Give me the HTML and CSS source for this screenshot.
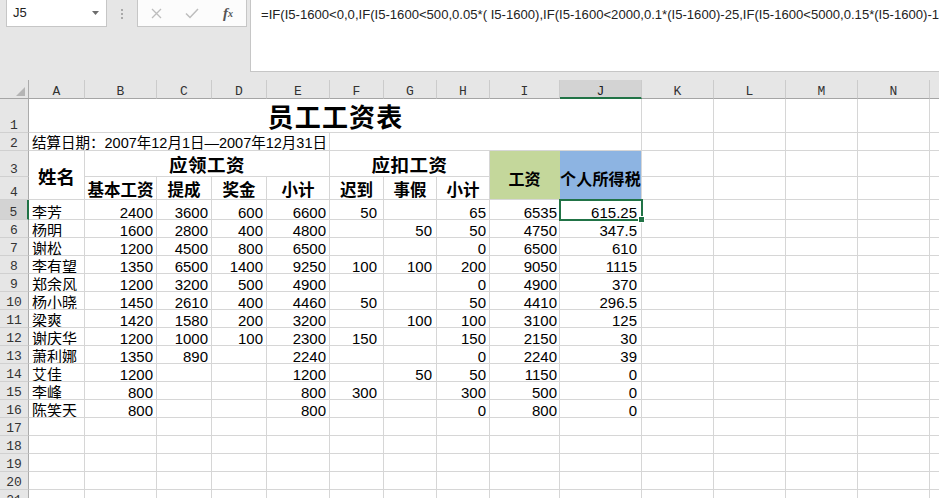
FILE: index.html
```html
<!DOCTYPE html>
<html lang="zh-CN">
<head>
<meta charset="utf-8">
<title>员工工资表</title>
<link rel="stylesheet" href="styles.css">
</head>
<body>
<div class="app">
  <div class="fbar">
    <div class="namebox"><span>J5</span><svg width="7" height="4" viewBox="0 0 7 4"><path d="M0 0H7L3.5 4Z" fill="#6d6d6d"/></svg></div>
    <div class="dots"><i></i><i></i><i></i></div>
    <div class="btns">
      <span class="btn"><svg width="11" height="11" viewBox="0 0 11 11"><path d="M1 1L10 10M10 1L1 10" stroke="#bdbdbd" stroke-width="1.3"/></svg></span>
      <span class="btn"><svg width="14" height="11" viewBox="0 0 14 11"><path d="M1 5.5L5 9.5L13 1" stroke="#bdbdbd" stroke-width="1.5" fill="none"/></svg></span>
      <span class="btn fx"><i>f</i><sub>x</sub></span>
    </div>
    <div class="finput">=IF(I5-1600&lt;0,0,IF(I5-1600&lt;500,0.05*( I5-1600),IF(I5-1600&lt;2000,0.1*(I5-1600)-25,IF(I5-1600&lt;5000,0.15*(I5-1600)-125,IF(I5-1600&lt;20000,0.2*(I5-1600)-375)))))</div>
  </div>
  <div class="sheet">
    <div class="corner"><svg width="9" height="9" viewBox="0 0 9 9"><path d="M9 0V9H0Z" fill="#b5b5b5"/></svg></div>
    <div class="ch">A</div><div class="ch">B</div><div class="ch">C</div><div class="ch">D</div><div class="ch">E</div><div class="ch">F</div><div class="ch">G</div><div class="ch">H</div><div class="ch">I</div><div class="ch sel">J</div><div class="ch">K</div><div class="ch">L</div><div class="ch">M</div><div class="ch">N</div><div class="ch">O</div>

    <div class="rh">1</div><div class="hd title">员工工资表</div><div></div><div></div><div></div><div></div><div></div>

    <div class="rh">2</div><div class="span5 date">结算日期：2007年12月1日—2007年12月31日</div><div class="span5"></div><div></div><div></div><div></div><div></div><div></div>

    <div class="rh">3</div><div class="hd rs2 xname">姓名</div><div class="hd grp span4">应领工资</div><div class="hd grp span3">应扣工资</div><div class="hd rs2 sum green">工资</div><div class="hd rs2 sum blue">个人所得税</div><div></div><div></div><div></div><div></div><div></div>

    <div class="rh">4</div><div class="hd sub">基本工资</div><div class="hd sub">提成</div><div class="hd sub">奖金</div><div class="hd sub">小计</div><div class="hd sub">迟到</div><div class="hd sub">事假</div><div class="hd sub">小计</div><div></div><div></div><div></div><div></div><div></div>

    <div class="rh sel">5</div><div>李芳</div><div class="n">2400</div><div class="n">3600</div><div class="n">600</div><div class="n">6600</div><div class="n nf">50</div><div class="n ng"></div><div class="n">65</div><div class="n ni">6535</div><div class="n nj act">615.25</div><div></div><div></div><div></div><div></div><div></div>

    <div class="rh">6</div><div>杨明</div><div class="n">1600</div><div class="n">2800</div><div class="n">400</div><div class="n">4800</div><div class="n nf"></div><div class="n ng">50</div><div class="n">50</div><div class="n ni">4750</div><div class="n nj">347.5</div><div></div><div></div><div></div><div></div><div></div>

    <div class="rh">7</div><div>谢松</div><div class="n">1200</div><div class="n">4500</div><div class="n">800</div><div class="n">6500</div><div class="n nf"></div><div class="n ng"></div><div class="n">0</div><div class="n ni">6500</div><div class="n nj">610</div><div></div><div></div><div></div><div></div><div></div>

    <div class="rh">8</div><div>李有望</div><div class="n">1350</div><div class="n">6500</div><div class="n">1400</div><div class="n">9250</div><div class="n nf">100</div><div class="n ng">100</div><div class="n">200</div><div class="n ni">9050</div><div class="n nj">1115</div><div></div><div></div><div></div><div></div><div></div>

    <div class="rh">9</div><div>郑余风</div><div class="n">1200</div><div class="n">3200</div><div class="n">500</div><div class="n">4900</div><div class="n nf"></div><div class="n ng"></div><div class="n">0</div><div class="n ni">4900</div><div class="n nj">370</div><div></div><div></div><div></div><div></div><div></div>

    <div class="rh">10</div><div>杨小晓</div><div class="n">1450</div><div class="n">2610</div><div class="n">400</div><div class="n">4460</div><div class="n nf">50</div><div class="n ng"></div><div class="n">50</div><div class="n ni">4410</div><div class="n nj">296.5</div><div></div><div></div><div></div><div></div><div></div>

    <div class="rh">11</div><div>梁爽</div><div class="n">1420</div><div class="n">1580</div><div class="n">200</div><div class="n">3200</div><div class="n nf"></div><div class="n ng">100</div><div class="n">100</div><div class="n ni">3100</div><div class="n nj">125</div><div></div><div></div><div></div><div></div><div></div>

    <div class="rh">12</div><div>谢庆华</div><div class="n">1200</div><div class="n">1000</div><div class="n">100</div><div class="n">2300</div><div class="n nf">150</div><div class="n ng"></div><div class="n">150</div><div class="n ni">2150</div><div class="n nj">30</div><div></div><div></div><div></div><div></div><div></div>

    <div class="rh">13</div><div>萧利娜</div><div class="n">1350</div><div class="n">890</div><div class="n"></div><div class="n">2240</div><div class="n nf"></div><div class="n ng"></div><div class="n">0</div><div class="n ni">2240</div><div class="n nj">39</div><div></div><div></div><div></div><div></div><div></div>

    <div class="rh">14</div><div>艾佳</div><div class="n">1200</div><div class="n"></div><div class="n"></div><div class="n">1200</div><div class="n nf"></div><div class="n ng">50</div><div class="n">50</div><div class="n ni">1150</div><div class="n nj">0</div><div></div><div></div><div></div><div></div><div></div>

    <div class="rh">15</div><div>李峰</div><div class="n">800</div><div class="n"></div><div class="n"></div><div class="n">800</div><div class="n nf">300</div><div class="n ng"></div><div class="n">300</div><div class="n ni">500</div><div class="n nj">0</div><div></div><div></div><div></div><div></div><div></div>

    <div class="rh">16</div><div>陈笑天</div><div class="n">800</div><div class="n"></div><div class="n"></div><div class="n">800</div><div class="n nf"></div><div class="n ng"></div><div class="n">0</div><div class="n ni">800</div><div class="n nj">0</div><div></div><div></div><div></div><div></div><div></div>

    <div class="rh">17</div><div></div><div></div><div></div><div></div><div></div><div></div><div></div><div></div><div></div><div></div><div></div><div></div><div></div><div></div><div></div>
    <div class="rh">18</div><div></div><div></div><div></div><div></div><div></div><div></div><div></div><div></div><div></div><div></div><div></div><div></div><div></div><div></div><div></div>
    <div class="rh">19</div><div></div><div></div><div></div><div></div><div></div><div></div><div></div><div></div><div></div><div></div><div></div><div></div><div></div><div></div><div></div>
    <div class="rh">20</div><div></div><div></div><div></div><div></div><div></div><div></div><div></div><div></div><div></div><div></div><div></div><div></div><div></div><div></div><div></div>
    <div class="rh">21</div><div></div><div></div><div></div><div></div><div></div><div></div><div></div><div></div><div></div><div></div><div></div><div></div><div></div><div></div><div></div>
  </div>
</div>
</body>
</html>
```

FILE: styles.css
```css
* { box-sizing: border-box; margin: 0; padding: 0; }
body { margin: 0; width: 939px; height: 498px; overflow: hidden; background: #e6e6e6; font-family: "Liberation Sans", "Noto Sans CJK SC", sans-serif; }
.app { width: 939px; height: 498px; overflow: hidden; background: #e6e6e6; }

/* formula bar */
.fbar { height: 80px; display: flex; align-items: flex-start; }
.namebox { margin-left: 6px; width: 101px; height: 27px; background: #fff; border: 1px solid #c6c6c6; border-top: none; display: flex; align-items: center; justify-content: space-between; padding: 0 7px 1px 6px; font-size: 13px; color: #222; }
.dots { width: 30px; display: flex; flex-direction: column; align-items: center; gap: 2px; padding-top: 9px; }
.dots i { display: block; width: 2px; height: 2px; background: #a9a9a9; }
.btns { width: 110px; height: 27px; border: 1px solid #c6c6c6; border-top: none; background: #fcfcfc; display: flex; align-items: center; }
.btn { width: 36px; display: flex; justify-content: center; align-items: center; }
.fx { font-family: "Liberation Serif", serif; font-style: italic; font-size: 15px; color: #555; font-weight: 700; }
.fx i { font-style: italic; }
.fx sub { font-size: 10px; vertical-align: -1px; }
.finput { margin-left: 3px; flex: 1; height: 72px; background: #fff; border: 1px solid #c6c6c6; border-top: none; border-right: none; padding: 7px 0 0 10px; font-size: 13.1px; line-height: 15px; color: #222; white-space: nowrap; overflow: hidden; }

/* sheet grid */
.sheet { display: grid; grid-template-columns: 29px 56px 72px 55px 55px 63px 54px 53px 53px 70px 82px 72px 72px 72px 72px 72px; grid-template-rows: 19px 34px 18px 26px 23px 20px repeat(16, 18px); width: 1002px; background: #fff; font-size: 15px; color: #000; }
.sheet > div { display: flex; align-items: flex-end; border-right: 1px solid #d6d6d6; border-bottom: 1px solid #d6d6d6; overflow: hidden; white-space: nowrap; padding: 0 3px; line-height: 13px; }

.corner { background: #e6e6e6; border-right-color: #ababab !important; border-bottom-color: #a5a5a5 !important; justify-content: flex-end; padding: 0 3px 2px 0 !important; }
.sheet > .ch { background: #e6e6e6; border-right-color: #cbcbcb; border-bottom-color: #a5a5a5; font-family: "Liberation Mono", monospace; font-size: 13px; color: #333; justify-content: center; align-items: flex-start; padding-top: 4px; line-height: 15px; }
.sheet > .ch.sel { background: #d3d3d3; border-bottom: 2px solid #217346; color: #222; }
.sheet > .rh { background: #e6e6e6; border-right-color: #ababab; border-bottom-color: #d0d0d0; font-family: "Liberation Mono", monospace; font-size: 13px; color: #333; justify-content: center; line-height: 11px; padding: 0 0 1px 0; }
.sheet > .rh.sel { background: #d3d3d3; border-right: 2px solid #217346; }

.sheet > .date { font-size: 14.5px; }
.n { justify-content: flex-end; }
.sheet > .nf { padding-right: 6px; }
.sheet > .ng { padding-right: 4px; }
.sheet > .ni { padding-right: 2px; }
.sheet > .nj { padding-right: 4px; }

.span5 { grid-column: span 5; }
.span4 { grid-column: span 4; }
.span3 { grid-column: span 3; }
.rs2 { grid-row: span 2; }
.title { grid-column: span 10; }

.sheet > .hd { font-family: "Noto Sans CJK SC", sans-serif; font-weight: 700; justify-content: center; align-items: center; line-height: 1; padding: 0; }
.sheet > .title { font-size: 26px; letter-spacing: 1.2px; padding-left: 1px; }
.sheet > .grp { font-size: 18.5px; letter-spacing: 0.5px; padding-top: 2px; }
.sheet > .xname { font-size: 18.5px; padding-top: 3px; }
.sheet > .sub { font-size: 16.5px; padding-top: 2px; }
.sheet > .sum { font-size: 16px; padding-top: 5px; }
.sheet > .green { background: #c4d79b; border-right-color: #c4d79b; }
.sheet > .blue { background: #8db4e2; border-right-color: #d6d6d6; letter-spacing: 0.2px; }

.act { position: relative; overflow: visible !important; }
.act::before { content: ""; position: absolute; left: -1px; top: -1px; right: -2px; bottom: -2px; border: 2px solid #217346; }
.act::after { content: ""; position: absolute; right: -4px; bottom: -4px; width: 5px; height: 5px; background: #217346; border: 1px solid #fff; }
```
